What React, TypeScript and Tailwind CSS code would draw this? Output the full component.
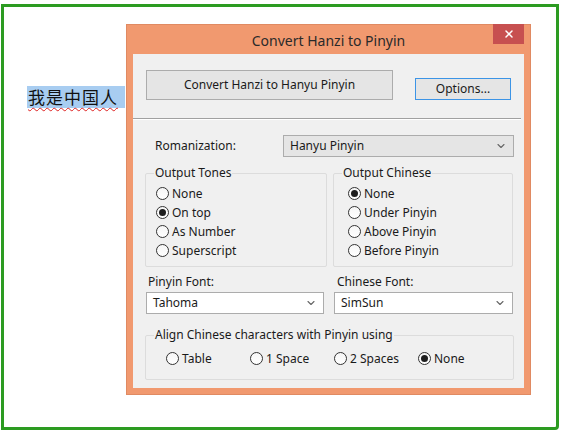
import React from 'react';
import { ChevronDown, X } from 'lucide-react';

const ui = { fontFamily: '"Segoe UI", "Noto Sans", "Open Sans", sans-serif' };

const Radio = ({ label, checked = false }: { label: string; checked?: boolean }) => (
  <div className="flex items-center gap-[3px] h-[19px]">
    <span className="w-[13px] h-[13px] rounded-full border border-[#333] bg-gradient-to-b from-[#f6f6f6] to-white flex items-center justify-center">
      {checked && <span className="w-[7px] h-[7px] rounded-full bg-[#1e1e1e]" />}
    </span>
    <span>{label}</span>
  </div>
);

const Select = ({ value, className = '' }: { value: string; className?: string }) => (
  <div className={`h-[22px] border border-[#acacac] flex items-center justify-between pl-[6px] pr-[6px] ${className}`}>
    <span>{value}</span>
    <ChevronDown size={12} strokeWidth={2.2} className="text-[#666]" />
  </div>
);

const GroupBox = ({ title, className = '', children }: { title: string; className?: string; children: React.ReactNode }) => (
  <fieldset className={`border border-[#dcdcdc] rounded-[2px] px-[8px] ${className}`}>
    <legend className="px-[1px] leading-[14px]">{title}</legend>
    {children}
  </fieldset>
);

export default function App() {
  return (
    <div className="w-[568px] h-[435px] bg-white pt-[4px] pl-[1px]" style={ui}>
      <div className="w-[558px] h-[426px] border-[3px] border-[#2c9b21] rounded-br-[4px] flex items-start">
        {/* Chinese text in the document */}
        <div className="mt-[79px] ml-[23px] w-[98px] h-[22px] bg-[#a8cdf1] flex items-center pl-[1px]">
          <span
            className="whitespace-nowrap text-[17px] leading-[20px] tracking-[1px] text-[#111] underline decoration-wavy decoration-[#d22] decoration-1 underline-offset-[3px]"
            style={{ fontFamily: '"Noto Sans CJK SC", sans-serif' }}
          >
            我是中国人
          </span>
        </div>

        {/* Dialog */}
        <div className="mt-[17px] ml-[1px] w-[405px] h-[371px] bg-[#f1996f] border border-[#e08a62] flex flex-col px-[6px] pb-[6px]">
          <div className="h-[29px] relative flex items-center justify-center">
            <span className="text-[14px] text-[#2a2a2a] mt-[1px]">Convert Hanzi to Pinyin</span>
            <div className="absolute right-[0px] top-[-1px] w-[31px] h-[20px] bg-[#c75050] flex items-center justify-center">
              <X size={12} strokeWidth={3} className="text-white" />
            </div>
          </div>

          <div className="flex-1 bg-[#f0f0f0] text-[12px] text-[#1a1a1a] flex flex-col">
            <div className="flex items-end justify-between pl-[13px] pr-[13px] pt-[16px]">
              <div className="w-[247px] h-[30px] bg-[#e5e5e5] border border-[#acacac] flex items-center justify-center">
                Convert Hanzi to Hanyu Pinyin
              </div>
              <div className="w-[96px] h-[22px] bg-[#e5e5e5] border border-[#3c94e6] flex items-center justify-center">
                Options...
              </div>
            </div>

            <div className="mt-[18px] mr-[3px] h-[2px] border-t border-[#a0a0a0] border-b border-b-white" />

            <div className="flex items-center mt-[15px] pl-[22px] pr-[10px]">
              <span className="w-[128px]">Romanization:</span>
              <Select value="Hanyu Pinyin" className="w-[231px] bg-[#e5e5e5]" />
            </div>

            <div className="flex gap-[6px] mt-[9px] pl-[12px]">
              <GroupBox title="Output Tones" className="w-[182px] h-[101px]">
                <div className="pt-[4px] pl-[2px]">
                  <Radio label="None" />
                  <Radio label="On top" checked />
                  <Radio label="As Number" />
                  <Radio label="Superscript" />
                </div>
              </GroupBox>
              <GroupBox title="Output Chinese" className="w-[180px] h-[101px]">
                <div className="pt-[4px] pl-[6px]">
                  <Radio label="None" checked />
                  <Radio label="Under Pinyin" />
                  <Radio label="Above Pinyin" />
                  <Radio label="Before Pinyin" />
                </div>
              </GroupBox>
            </div>

            <div className="flex gap-[10px] mt-[7px] pl-[13px]">
              <div className="flex flex-col gap-[2px]">
                <span className="pl-[2px] leading-[16px]">Pinyin Font:</span>
                <Select value="Tahoma" className="w-[178px] bg-white" />
              </div>
              <div className="flex flex-col gap-[2px]">
                <span className="pl-[3px] leading-[16px]">Chinese Font:</span>
                <Select value="SimSun" className="w-[179px] bg-white" />
              </div>
            </div>

            <GroupBox title="Align Chinese characters with Pinyin using" className="mt-[14px] ml-[12px] w-[369px] h-[52px]">
              <div className="flex mt-[7px] pl-[12px]">
                <div className="w-[84px]"><Radio label="Table" /></div>
                <div className="w-[84px]"><Radio label="1 Space" /></div>
                <div className="w-[84px]"><Radio label="2 Spaces" /></div>
                <Radio label="None" checked />
              </div>
            </GroupBox>
          </div>
        </div>
      </div>
    </div>
  );
}
